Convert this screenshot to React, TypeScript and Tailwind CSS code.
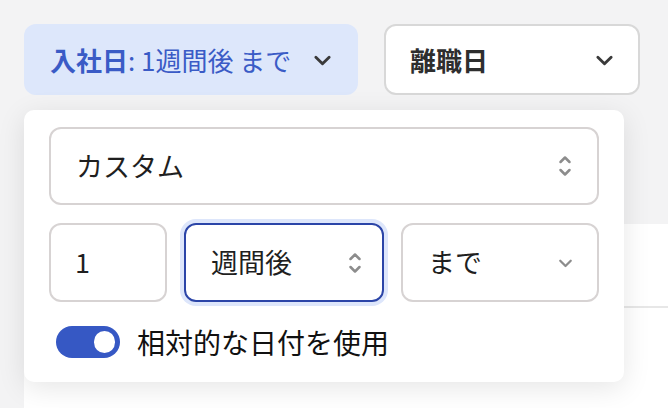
const ChevronDown = ({ className = "" }: { className?: string }) => (
  <svg viewBox="0 0 20 12" className={className} fill="none" stroke="currentColor" strokeWidth={3} strokeLinecap="round" strokeLinejoin="round">
    <path d="M3 3l7 7 7-7" />
  </svg>
)

const UpDown = () => (
  <svg viewBox="0 0 14 22" className="w-[14px] h-[22px] text-[#8c8c8c]" fill="none" stroke="currentColor" strokeWidth={2.5} strokeLinecap="round" strokeLinejoin="round">
    <path d="M2.5 7l4.5-4.5 4.5 4.5" />
    <path d="M2.5 15l4.5 4.5 4.5-4.5" />
  </svg>
)

const Toggle = () => (
  <div className="w-[64px] h-[32px] rounded-full bg-[#3658c4] flex items-center justify-end pr-[5px]">
    <span className="w-[21px] h-[22px] rounded-full bg-white" />
  </div>
)

export default function App() {
  return (
    <div
      className="relative w-[668px] h-[408px] overflow-hidden bg-[#f3f3f4] text-[#1f1f1f]"
      style={{ fontFamily: '"Noto Sans CJK JP", "Noto Sans", sans-serif' }}
    >
      {/* toolbar */}
      <div className="flex gap-[26px] pl-[24px] pt-[24px]">
        <button className="w-[334px] h-[71px] rounded-[12px] bg-[#dde7fb] flex items-center justify-between pl-[26px] pr-[26px] text-[#3a5bc6] text-[26px]">
          <span className="leading-none">
            <span className="font-bold">入社日</span>: 1週間後 まで
          </span>
          <ChevronDown className="w-[19px] h-[12px] text-[#3a3a3a]" />
        </button>
        <button className="w-[256px] h-[71px] rounded-[12px] bg-white border-2 border-[#d8d8d8] flex items-center justify-between pl-[24px] pr-[24px] text-[26px] text-[#2e2e2e]">
          <span className="font-bold leading-none">離職日</span>
          <ChevronDown className="w-[19px] h-[12px] text-[#3a3a3a]" />
        </button>
      </div>

      {/* table behind */}
      <div className="ml-[24px] mt-[129px] h-[200px] bg-white">
        <div className="h-[84px] border-b-2 border-[#e7e7e7]" />
      </div>

      {/* popover */}
      <div className="absolute left-[24px] top-[110px] w-[600px] h-[272px] bg-white rounded-[10px] shadow-[0_6px_28px_rgba(0,0,0,0.10)] px-[25px] pt-[17px] flex flex-col">
        <div className="h-[78px] rounded-[12px] border-2 border-[#d7d3d3] flex items-center justify-between pl-[25px] pr-[25px] text-[27px]">
          <span>カスタム</span>
          <UpDown />
        </div>
        <div className="flex gap-[17px] mt-[18px] h-[79px]">
          <div className="w-[118px] rounded-[12px] border-2 border-[#d7d3d3] flex items-center pl-[24px] text-[27px]">1</div>
          <div className="w-[200px] rounded-[12px] border-2 border-[#2b45a8] ring-4 ring-[#dde6fb] flex items-center justify-between pl-[25px] pr-[20px] text-[27px]">
            <span>週間後</span>
            <UpDown />
          </div>
          <div className="w-[198px] rounded-[12px] border-2 border-[#d7d3d3] flex items-center justify-between pl-[25px] pr-[24px] text-[27px]">
            <span>まで</span>
            <ChevronDown className="w-[15px] h-[10px] text-[#8c8c8c]" />
          </div>
        </div>
        <div className="flex items-center gap-[17px] mt-[24px] ml-[7px]">
          <Toggle />
          <span className="text-[28px] leading-none text-[#111]">相対的な日付を使用</span>
        </div>
      </div>
    </div>
  )
}
